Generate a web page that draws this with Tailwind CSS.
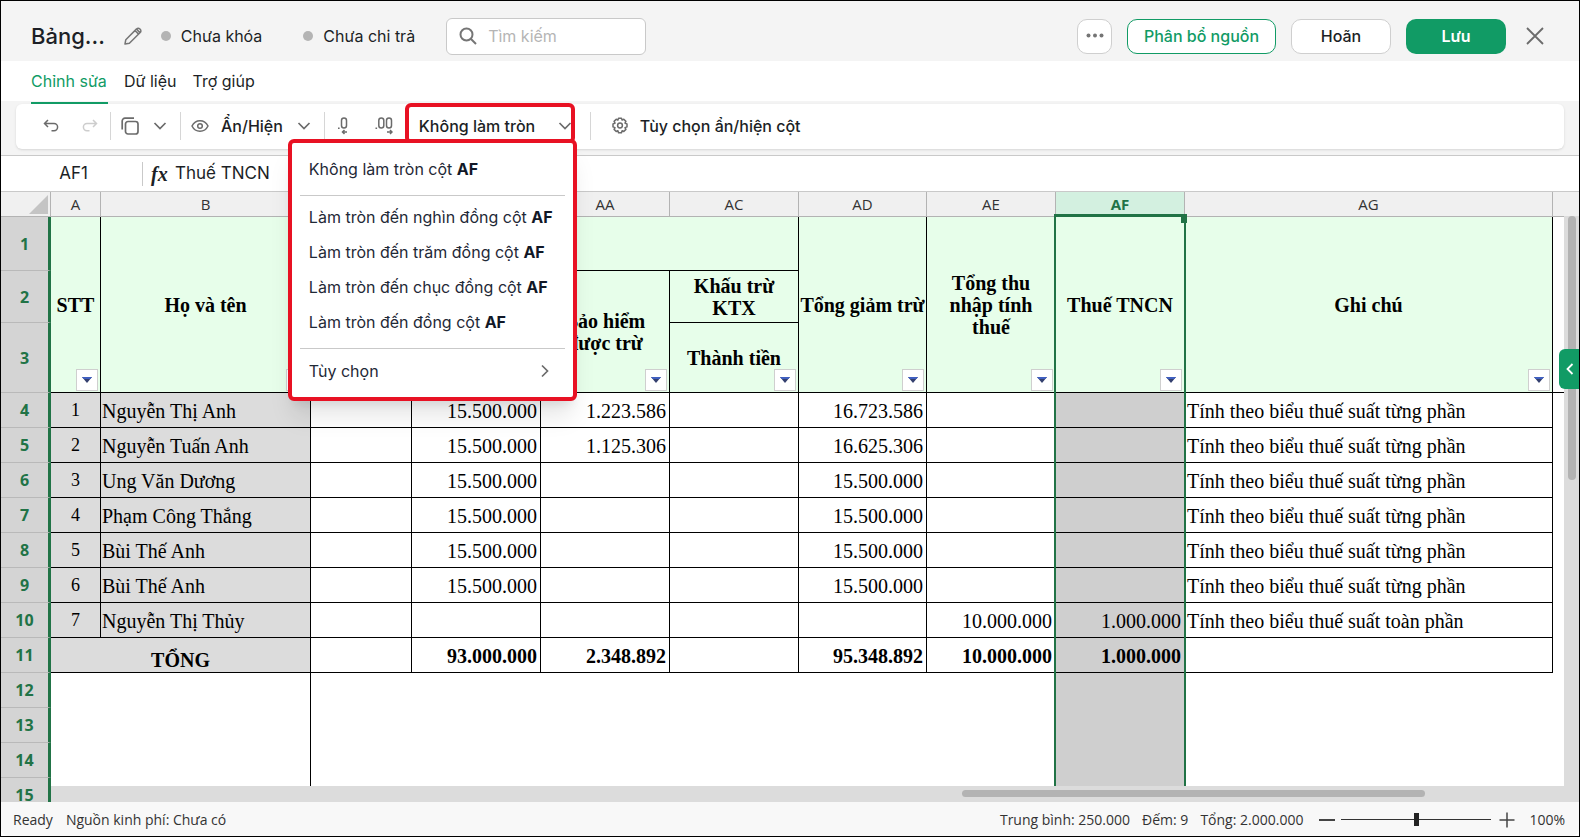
<!DOCTYPE html>
<html lang="vi">

<head>
    <meta charset="UTF-8">
    <meta name="viewport" content="width=device-width, initial-scale=1.0">
    <title>Bảng thuế TNCN</title>
    <script src="https://cdn.jsdelivr.net/npm/@tailwindcss/browser@4"></script>
</head>

<body class="h-screen flex flex-col overflow-hidden border border-black bg-white font-['Inter','Liberation_Sans',sans-serif] text-base text-[#1c1f26]">

    <!-- Title bar -->
    <header class="flex items-center h-[60px] pt-[10px] pl-[30px] pr-[30px] bg-[#f4f4f4] shrink-0">
        <h1 class="text-[22px] font-medium">Bảng...</h1>
        <button class="ml-[18px] size-5 text-[#757575]" aria-label="Đổi tên">
            <svg class="size-5" viewBox="0 0 20 20" fill="none" stroke="currentColor" stroke-width="1.5" stroke-linejoin="round">
                <path d="M2 18l.8-4.3L13.6 2.9a2.2 2.2 0 0 1 3.2 0l.4.4a2.2 2.2 0 0 1 0 3.2L6.4 17.2z M12 4.5l3.6 3.6 M13.4 3l3.6 3.6" />
            </svg>
        </button>
        <span class="ml-[18px] size-[10px] rounded-full bg-[#b4b4b4]"></span>
        <span class="ml-[10px]">Chưa khóa</span>
        <span class="ml-[41px] size-[10px] rounded-full bg-[#b4b4b4]"></span>
        <span class="ml-[10px]">Chưa chi trả</span>
        <label class="ml-[31px] flex items-center w-[200px] h-[37px] pl-3 rounded-md border border-[#c9c9c9] bg-white text-[#757575]">
            <svg class="size-[18px] shrink-0" viewBox="0 0 18 18" fill="none" stroke="currentColor" stroke-width="2">
                <circle cx="7.5" cy="7.5" r="6" />
                <path d="M12 12l5 5" />
            </svg>
            <input class="ml-[11px] w-full min-w-0 outline-none placeholder:text-[#b5b5b5]" type="text" placeholder="Tìm kiếm" aria-label="Tìm kiếm">
        </label>

        <div class="ml-auto flex items-center gap-[15px]">
            <button class="flex items-center justify-center size-[35px] rounded-[10px] border border-[#cfcfcf] bg-white text-[#757575]" aria-label="Thêm">
                <svg class="size-[18px]" viewBox="0 0 18 18" fill="currentColor">
                    <circle cx="2.5" cy="8.5" r="2" />
                    <circle cx="9" cy="8.5" r="2" />
                    <circle cx="15.5" cy="8.5" r="2" />
                </svg>
            </button>
            <button class="w-[149px] h-[35px] rounded-[10px] border border-[#119b65] bg-white font-medium text-[#119b65]">Phân bổ nguồn</button>
            <button class="w-[100px] h-[35px] rounded-[10px] border border-[#cfcfcf] bg-white font-medium">Hoãn</button>
            <button class="w-[100px] h-[35px] rounded-[10px] bg-[#119b65] font-semibold text-white">Lưu</button>
            <button class="size-7 flex items-center justify-center text-[#6b6b6b]" aria-label="Đóng">
                <svg class="size-[18px]" viewBox="0 0 18 18" fill="none" stroke="currentColor" stroke-width="1.8">
                    <path d="M1 1l16 16M17 1L1 17" />
                </svg>
            </button>
        </div>
    </header>

    <!-- Tabs -->
    <nav class="flex gap-4 h-10 pl-[30px] bg-white shrink-0">
        <a href="#" class="relative z-10 flex items-center min-w-[77px] text-[#119b65]">Chỉnh sửa
            <span class="absolute inset-x-0 -bottom-[3px] h-[2px] bg-[#119b65]"></span>
        </a>
        <a href="#" class="flex items-center">Dữ liệu</a>
        <a href="#" class="flex items-center">Trợ giúp</a>
    </nav>

    <!-- Toolbar -->
    <div class="h-[55px] pt-[3px] px-[15px] bg-[#f4f4f4] border-b border-[#c9c9c9] shrink-0">
        <div class="flex items-center h-[45px] pl-[23px] pb-[2px] rounded-md bg-white shadow text-[#6b6b6b]">
            <button class="size-6 flex items-center justify-center" aria-label="Hoàn tác">
                <svg class="size-4" viewBox="0 0 16 16" fill="none" stroke="currentColor" stroke-width="1.5">
                    <path d="M5 2L1.5 5.5 5 9M1.5 5.5H11a3.6 3.6 0 0 1 0 7.2H8.5" />
                </svg>
            </button>
            <button class="ml-[15px] size-6 flex items-center justify-center text-[#cdcdcd]" aria-label="Làm lại">
                <svg class="size-4" viewBox="0 0 16 16" fill="none" stroke="currentColor" stroke-width="1.5">
                    <path d="M11 2l3.5 3.5L11 9M14.5 5.5H5a3.6 3.6 0 0 0 0 7.2h2.5" />
                </svg>
            </button>
            <span class="ml-2 w-px h-7 bg-[#d6d6d6]"></span>
            <button class="ml-[7px] size-6 flex items-center justify-center" aria-label="Sao chép">
                <svg class="size-[18px]" viewBox="0 0 18 18" fill="none" stroke="currentColor" stroke-width="1.7">
                    <rect x="4.5" y="4.5" width="12.5" height="12.5" rx="2.5" />
                    <path d="M1.2 12.5V4A2.8 2.8 0 0 1 4 1.200h9" />
                </svg>
            </button>
            <button class="ml-[6px] size-6 flex items-center justify-center" aria-label="Kiểu sao chép">
                <svg class="w-[14px] h-2" viewBox="0 0 14 8" fill="none" stroke="currentColor" stroke-width="1.7"><path d="M1.5 1L7 6.5 12.5 1" /></svg>
            </button>
            <span class="ml-2 w-px h-7 bg-[#d6d6d6]"></span>
            <button class="ml-[10px] flex items-center font-medium">
                <svg class="w-[18px] h-[14px]" viewBox="0 0 18 14" fill="none" stroke="currentColor" stroke-width="1.5">
                    <path d="M1 7c1.700-3.500 4.600-5.300 8-5.300S15.300 3.500 17 7c-1.700 3.500-4.600 5.300-8 5.300S2.700 10.500 1 7z" />
                    <circle cx="9" cy="7" r="2.300" />
                </svg>
                <span class="ml-3 text-[#1c1f26]">Ẩn/Hiện</span>
                <svg class="ml-[14px] w-[14px] h-2" viewBox="0 0 14 8" fill="none" stroke="currentColor" stroke-width="1.7"><path d="M1.5 1L7 6.5 12.5 1" /></svg>
            </button>
            <span class="ml-[13px] w-px h-7 bg-[#d6d6d6]"></span>
            <button class="ml-[6px] size-6 flex items-center justify-center" aria-label="Giảm số thập phân">
                <svg class="w-3 h-[18px]" viewBox="0 0 12 18" fill="none" stroke="currentColor" stroke-width="1.5">
                    <rect x="4.5" y="1" width="5" height="10" rx="2.5" />
                    <path d="M1 11.200h1.600M10 15H5.500M7.500 13l-2 2 2 2" />
                </svg>
            </button>
            <button class="ml-[15px] w-7 h-6 flex items-center justify-center" aria-label="Tăng số thập phân">
                <svg class="w-[18px] h-[18px]" viewBox="0 0 18 18" fill="none" stroke="currentColor" stroke-width="1.5">
                    <rect x="3.8" y="1" width="5" height="10" rx="2.5" />
                    <rect x="11.5" y="1" width="5" height="10" rx="2.5" />
                    <path d="M.5 11.200h1.600M12 15h5M15 13l2 2-2 2" />
                </svg>
            </button>

            <!-- Rounding drop-down, open -->
            <div class="relative z-20 ml-[7px] w-[170px] h-full">
                <button class="flex items-center justify-between w-full h-full pl-[14px] pr-[3px] font-medium text-[#1c1f26]" aria-expanded="true">
                    Không làm tròn
                    <svg class="w-[14px] h-2 text-[#6b6b6b]" viewBox="0 0 14 8" fill="none" stroke="currentColor" stroke-width="1.7"><path d="M1.5 1L7 6.5 12.5 1" /></svg>
                </button>
                <span class="absolute inset-x-0 -top-px h-[41px] border-4 border-[#e81123] rounded-md pointer-events-none"></span>
                <div class="absolute top-[35px] -left-[117px] w-[289px] pt-2 pb-[9px] px-2 border-4 border-[#e81123] rounded-md bg-white shadow-xl text-[#1f2937] whitespace-nowrap">
                    <button class="block w-full h-[35px] pl-[9px] text-left">Không làm tròn cột <b class="font-bold text-[#111827]">AF</b></button>
                    <hr class="mt-[9px] mb-[3px] border-[#c9c9c9]">
                    <button class="block w-full h-[35px] pl-[9px] text-left">Làm tròn đến nghìn đồng cột <b class="font-bold text-[#111827]">AF</b></button>
                    <button class="block w-full h-[35px] pl-[9px] text-left">Làm tròn đến trăm đồng cột <b class="font-bold text-[#111827]">AF</b></button>
                    <button class="block w-full h-[35px] pl-[9px] text-left">Làm tròn đến chục đồng cột <b class="font-bold text-[#111827]">AF</b></button>
                    <button class="block w-full h-[35px] pl-[9px] text-left">Làm tròn đến đồng cột <b class="font-bold text-[#111827]">AF</b></button>
                    <hr class="mt-[9px] mb-1 border-[#c9c9c9]">
                    <button class="flex items-center justify-between w-full h-[35px] pl-[9px] pr-4">
                        Tùy chọn
                        <svg class="w-2 h-[14px] text-[#6b6b6b]" viewBox="0 0 8 14" fill="none" stroke="currentColor" stroke-width="1.7"><path d="M1 1.5L6.5 7 1 12.5" /></svg>
                    </button>
                </div>
            </div>

            <span class="ml-[15px] w-px h-7 bg-[#d6d6d6]"></span>
            <button class="ml-5 flex items-center gap-[11px] font-medium">
                <svg class="size-[18px]" viewBox="0 0 18 18" fill="none" stroke="currentColor" stroke-width="1.5" stroke-linejoin="round">
                    <path d="M7.500 1.200h3l.6 1.900 1.700-.8 2.100 2.100-.9 1.800 2 .7v3l-2 .7.9 1.800-2.100 2.100-1.700-.8-.6 2.100h-3l-.6-2.100-1.700.8-2.100-2.100.9-1.800-2-.7v-3l2-.7-.9-1.800 2.100-2.100 1.700.8z" />
                    <circle cx="9" cy="8.500" r="2.400" />
                </svg>
                <span class="text-[#1c1f26]">Tùy chọn ẩn/hiện cột</span>
            </button>
        </div>
    </div>

    <!-- Formula bar -->
    <div class="flex items-center h-9 pt-px bg-white border-b border-[#c9c9c9] text-[17px] shrink-0">
        <span class="w-[141px] pl-1 text-center">AF1</span>
        <span class="w-px h-6 bg-[#c9c9c9]"></span>
        <span class="ml-2 w-[22px] font-['Liberation_Serif',serif] italic font-bold text-xl leading-6">fx</span>
        <span class="ml-[2px]">Thuế TNCN</span>
    </div>

    <!-- Sheet -->
    <main class="relative flex-1 min-h-0 overflow-hidden bg-white">
        <table class="w-full table-fixed border-separate border-spacing-0 font-['Liberation_Serif',serif] text-xl leading-6 text-black">
            <colgroup>
                <col class="w-[50px]">
                <col class="w-[50px]">
                <col class="w-[210px]">
                <col class="w-[101px]">
                <col class="w-[129px]">
                <col class="w-[129px]">
                <col class="w-[129px]">
                <col class="w-[128px]">
                <col class="w-[129px]">
                <col class="w-[129px]">
                <col class="w-[368px]">
                <col>
            </colgroup>
            <thead id="sheetHead"></thead>
            <tbody id="sheetBody"></tbody>
        </table>

        <!-- selected column outline -->
        <div class="absolute top-[22px] bottom-4 left-[1053px] w-[132px] border-x-2 border-t-[3px] border-[#217346] pointer-events-none">
            <span class="absolute -top-[3px] -right-[3px] w-[6px] h-[9px] bg-[#217346]"></span>
        </div>

        <!-- scrollbars -->
        <div class="absolute top-6 bottom-0 right-0 w-[15px] bg-[#dcdcdc]">
            <div class="mx-auto w-2 h-[264px] rounded-full bg-[#b3b3b3]"></div>
        </div>
        <div class="absolute bottom-0 left-[50px] right-0 h-4 bg-[#dcdcdc]">
            <div class="mt-1 ml-[911px] w-[463px] h-[7px] rounded-full bg-[#b3b3b3]"></div>
        </div>

        <button class="absolute top-[157px] right-0 flex items-center justify-center w-5 h-10 pl-[2px] rounded-l-md bg-[#119b65] text-white" aria-label="Mở bảng bên">
            <svg class="w-2 h-3" viewBox="0 0 8 12" fill="none" stroke="currentColor" stroke-width="1.8"><path d="M6.5 1L1.5 6l5 5" /></svg>
        </button>
    </main>

    <!-- Status bar -->
    <footer class="flex items-center h-[34px] pt-px pl-3 pr-[14px] bg-[#f8f8f8] rounded-b-lg font-['Open_Sans',sans-serif] text-sm text-[#333] shrink-0">
        <span>Ready</span>
        <span class="ml-[13px]">Nguồn kinh phí: Chưa có</span>
        <span class="ml-auto">Trung bình: 250.000</span>
        <span class="ml-3">Đếm: 9</span>
        <span class="ml-3">Tổng: 2.000.000</span>
        <button class="ml-4 w-4 h-4 flex items-center" aria-label="Thu nhỏ"><span class="w-full h-[2px] bg-[#444]"></span></button>
        <input type="range" min="0" max="200" value="100" aria-label="Thu phóng"
            class="ml-[6px] w-[150px] h-4 appearance-none bg-transparent [&::-webkit-slider-runnable-track]:h-px [&::-webkit-slider-runnable-track]:bg-[#333] [&::-webkit-slider-thumb]:appearance-none [&::-webkit-slider-thumb]:w-[5px] [&::-webkit-slider-thumb]:h-[13px] [&::-webkit-slider-thumb]:-mt-[6px] [&::-webkit-slider-thumb]:bg-[#222]">
        <button class="ml-2 w-4 h-4" aria-label="Phóng to">
            <svg class="size-4" viewBox="0 0 16 16" fill="none" stroke="#444" stroke-width="1.5"><path d="M8 .5v15M.5 8h15" /></svg>
        </button>
        <span class="ml-[14px]">100%</span>
    </footer>

    <script>
        // the two blank letters belong to columns covered by the open menu
        const columns = ['A', 'B', '', '', 'AA', 'AC', 'AD', 'AE', 'AF', 'AG'];
        const partial = 'Tính theo biểu thuế suất từng phần';
        const rows = [
            ['1', 'Nguyễn Thị Anh', '', '15.500.000', '1.223.586', '', '16.723.586', '', '', partial],
            ['2', 'Nguyễn Tuấn Anh', '', '15.500.000', '1.125.306', '', '16.625.306', '', '', partial],
            ['3', 'Ung Văn Dương', '', '15.500.000', '', '', '15.500.000', '', '', partial],
            ['4', 'Phạm Công Thắng', '', '15.500.000', '', '', '15.500.000', '', '', partial],
            ['5', 'Bùi Thế Anh', '', '15.500.000', '', '', '15.500.000', '', '', partial],
            ['6', 'Bùi Thế Anh', '', '15.500.000', '', '', '15.500.000', '', '', partial],
            ['7', 'Nguyễn Thị Thủy', '', '', '', '', '', '10.000.000', '1.000.000', 'Tính theo biểu thuế suất toàn phần'],
        ];
        const totals = ['', '93.000.000', '2.348.892', '', '95.348.892', '10.000.000', '1.000.000', ''];

        const filter = `<button class="absolute right-[2px] bottom-px flex items-center justify-center size-[22px] border border-[#cfcfcf] bg-white" aria-label="Lọc">
            <svg class="w-[10px] h-[6px]" viewBox="0 0 10 6"><path d="M0 0h10L5 6z" fill="#34406f" /><path d="M0 0h10L8.300 2H1.700z" fill="#3f5fc0" /></svg></button>`;

        const rowNo = (n) => `<th scope="row" class="p-0 border-b border-b-[#b9b9b9] border-r-[3px] border-r-[#217346] bg-[#d4d4d4] align-middle font-['Open_Sans',sans-serif] text-base font-bold text-[#217346]">${n}</th>`;
        const head = (text, attrs = '', withFilter = true) =>
            `<th ${attrs} class="relative p-0 pt-px border-r border-b border-black bg-[#e7feea] align-middle text-center leading-[22px] font-bold">${text}${withFilter ? filter : ''}</th>`;

        // column letters
        let html = `<tr class="h-[25px]"><th class="p-0 border-r border-b border-[#b3b3b3] bg-[#f0f0f0]">
            <svg class="ml-auto mr-[2px] size-[19px]" viewBox="0 0 19 19"><path d="M19 0v19H0z" fill="#c4c4c4" /></svg></th>`;
        columns.forEach((c) => {
            html += c === 'AF'
                ? `<th class="p-0 border-r border-b border-[#b3b3b3] bg-[#d3f0e0] font-['Open_Sans',sans-serif] text-[15px] leading-5 font-bold text-[#217346]">${c}</th>`
                : `<th class="p-0 border-r border-b border-[#b3b3b3] bg-[#f0f0f0] font-['Open_Sans',sans-serif] text-[15px] leading-5 font-normal text-[#333]">${c}</th>`;
        });
        html += '<th class="p-0 border-b border-[#b3b3b3] bg-[#f0f0f0]"></th></tr>';

        // merged header cells
        html += `<tr class="h-[54px]">${rowNo(1)}${head('STT', 'rowspan="3"')}${head('Họ và tên', 'rowspan="3"')}${head('', 'colspan="4"', false)}
            ${head('Tổng giảm trừ', 'rowspan="3"')}${head('Tổng thu<br>nhập tính<br>thuế', 'rowspan="3"')}${head('Thuế TNCN', 'rowspan="3"')}${head('Ghi chú', 'rowspan="3"')}
            <td rowspan="3" class="border-b border-black"></td></tr>`;
        html += `<tr class="h-[52px]">${rowNo(2)}${head('', 'rowspan="2"')}${head('', 'rowspan="2"')}${head('Bảo hiểm<br>được trừ', 'rowspan="2"')}${head('Khấu trừ<br>KTX', '', false)}</tr>`;
        html += `<tr class="h-[70px]">${rowNo(3)}${head('Thành tiền')}</tr>`;
        document.getElementById('sheetHead').innerHTML = html;

        // data rows
        html = '';
        rows.forEach((row, i) => {
            html += `<tr class="h-[35px]">${rowNo(i + 4)}`;
            row.forEach((v, c) => {
                if (c === 0) html += `<td class="p-0 border-r border-b border-black bg-[#dcdcdc] align-middle text-center text-lg leading-6">${v}</td>`;
                else if (c === 1) html += `<td class="p-0 pl-px pb-1 border-r border-b border-black bg-[#dcdcdc] align-bottom">${v}</td>`;
                else if (c === 8) html += `<td class="p-0 pr-[3px] pb-1 border-r border-b border-black bg-[#cfcfcf] align-bottom text-right">${v}</td>`;
                else if (c === 9) html += `<td class="p-0 pl-[2px] pb-1 border-r border-b border-black align-bottom">${v}</td>`;
                else html += `<td class="p-0 pr-[3px] pb-1 border-r border-b border-black align-bottom text-right">${v}</td>`;
            });
            html += '<td></td></tr>';
        });

        // totals
        html += `<tr class="h-[35px] font-bold">${rowNo(11)}<td colspan="2" class="p-0 border-r border-b border-black bg-[#dcdcdc] align-bottom text-center">TỔNG</td>`;
        totals.forEach((v, c) => {
            html += c === 6
                ? `<td class="p-0 pr-[3px] pb-1 border-r border-b border-black bg-[#cfcfcf] align-bottom text-right">${v}</td>`
                : `<td class="p-0 pr-[3px] pb-1 border-r border-b border-black align-bottom text-right">${v}</td>`;
        });
        html += '<td></td></tr>';

        // empty rows
        for (let n = 12; n <= 15; n++) {
            html += `<tr class="h-[35px]">${rowNo(n)}<td colspan="2" class="border-r border-black"></td><td colspan="6"></td><td class="bg-[#cfcfcf]"></td><td colspan="2"></td></tr>`;
        }
        document.getElementById('sheetBody').innerHTML = html;
    </script>
</body>

</html>
